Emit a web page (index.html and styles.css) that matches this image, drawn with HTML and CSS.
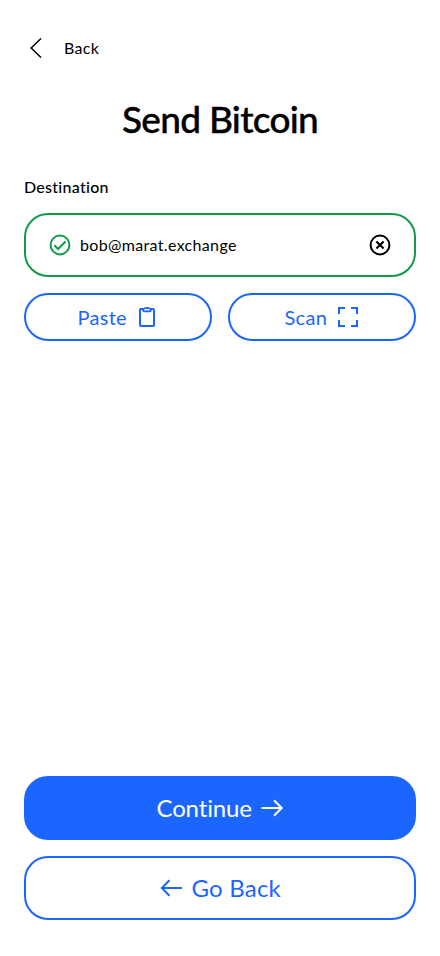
FILE: index.html
```html
<!DOCTYPE html>
<html lang="en">
<head>
<meta charset="utf-8">
<meta name="viewport" content="width=device-width, initial-scale=1">
<title>Send Bitcoin</title>
<link rel="stylesheet" href="styles.css">
</head>
<body>
<main class="screen">
  <a class="back">
    <svg width="24" height="24" viewBox="0 0 24 24"><path d="M17 2.5 7.2 12 17 21.5" stroke-width="1.5"/></svg>
    <span class="back-label">Back</span>
  </a>
  <h1 class="title"><span>Send Bitcoin</span></h1>
  <div class="label"><span>Destination</span></div>
  <div class="field">
    <svg class="ok" width="24" height="24" viewBox="0 0 24 24"><circle cx="12" cy="12" r="9.4" stroke-width="2"/><path d="m6.3 12.2 3.8 3.8 7.5-7.5" stroke-width="2"/></svg>
    <span class="address">bob@marat.exchange</span>
    <svg width="24" height="24" viewBox="0 0 24 24"><circle cx="12" cy="12" r="9.4" stroke-width="2"/><path d="m8.4 8.4 7.2 7.2M15.6 8.4l-7.2 7.2" stroke-width="2.1"/></svg>
  </div>
  <div class="pair">
    <button class="btn small"><span class="paste">Paste</span>
      <svg width="24" height="24" viewBox="0 0 24 24"><path d="M8.5 4H5.8Q5 4 5 4.8v15.4q0 .8.8.8h12.4q.8 0 .8-.8V4.8q0-.8-.8-.8h-2.7" stroke-width="2"/><path d="M8 4.5C8 6.2 8.8 6.4 9.5 6.4h5C15.2 6.4 16 6.2 16 4.5 16 3.6 15 3.6 14.4 3.4 13.8 2.8 13.2 2.8 12 2.8s-1.8 0-2.4.6C9 3.6 8 3.6 8 4.5Z" stroke-width="1.8"/></svg>
    </button>
    <button class="btn small"><span class="scan">Scan</span>
      <svg width="24" height="24" viewBox="0 0 24 24"><path d="M3 9V3h6M15 3h6v6M21 15v6h-6M9 21H3v-6" stroke-width="2"/></svg>
    </button>
  </div>
  <footer class="actions">
    <button class="btn large primary"><span class="continue">Continue</span>
      <svg width="24" height="24" viewBox="0 0 24 24"><path d="M1.5 12h20M14 4.3l7.7 7.7-7.7 7.7" stroke-width="2"/></svg>
    </button>
    <button class="btn large">
      <svg width="24" height="24" viewBox="0 0 24 24"><path d="M22 12H2M9.5 4.3 1.8 12l7.7 7.7" stroke-width="2"/></svg>
      <span class="go-back">Go Back</span>
    </button>
  </footer>
</main>
</body>
</html>
```
FILE: styles.css
```css
* { box-sizing: border-box; }
body {
  margin: 0;
  background: #fff;
  color: #000;
  font-family: Lato, "Liberation Sans", sans-serif;
  font-size: 16px;
  font-variant-ligatures: none;
}
svg { flex: none; display: block; fill: none; stroke: currentColor; }
span { white-space: nowrap; }
.screen {
  display: flex;
  flex-direction: column;
  height: 956px;
  padding: 36px 24px;
}
.back { display: flex; align-items: center; gap: 16px; height: 24px; }
.back-label { padding-bottom: 2px; letter-spacing: 0.3px; }
.title {
  margin: 35px 0 0;
  height: 48px;
  font-size: 37px;
  font-weight: 500;
  line-height: 48px;
  letter-spacing: -0.7px;
  text-align: center;
  -webkit-text-stroke: 0.4px #000;
}
.label {
  margin-top: 34px;
  height: 20px;
  line-height: 20px;
  font-weight: 500;
  letter-spacing: 0.27px;
}
.field {
  display: flex;
  align-items: center;
  gap: 8px;
  height: 64px;
  margin-top: 16px;
  padding: 0 22px;
  border: 2px solid #13994a;
  border-radius: 24px;
}
.ok { color: #13994a; }
.address { flex: 1; padding-bottom: 2px; letter-spacing: 0.34px; }
.pair { display: grid; grid-template-columns: 1fr 1fr; gap: 16px; margin-top: 16px; }
.btn {
  display: flex;
  align-items: center;
  justify-content: center;
  gap: 8px;
  padding: 0;
  border: 2px solid #1a66ff;
  border-radius: 24px;
  background: #fff;
  color: #1a66ff;
  font-family: inherit;
  font-variant-ligatures: none;
  text-align: left;
}
.small { height: 48px; font-size: 20px; }
.large { height: 64px; font-size: 24px; }
.primary { background: #1a66ff; color: #fff; }
.paste { width: 49px; letter-spacing: 0.3px; }
.scan { width: 43px; letter-spacing: 0.3px; }
.continue { width: 95px; padding-bottom: 2px; letter-spacing: -0.15px; }
.go-back { width: 89px; padding-bottom: 2px; letter-spacing: 0.2px; }
.actions { display: flex; flex-direction: column; gap: 16px; margin-top: auto; }
```
